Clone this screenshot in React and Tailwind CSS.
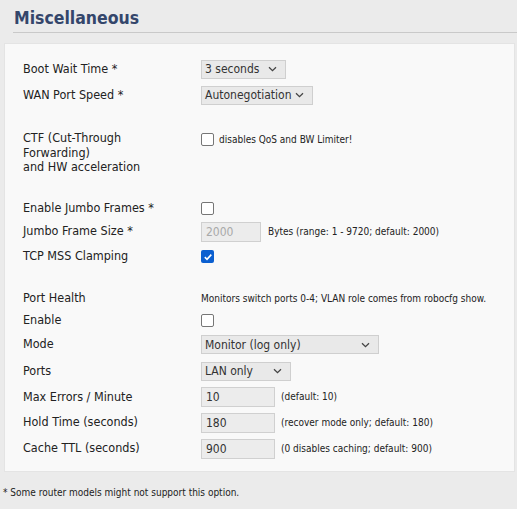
import React from "react";

const font = { fontFamily: '"DejaVu Sans Condensed", "DejaVu Sans", sans-serif' };

function Chevron() {
  return (
    <svg width="9" height="6" viewBox="0 0 9 6" className="shrink-0">
      <path d="M1 1.2 L4.5 4.6 L8 1.2" fill="none" stroke="#444" strokeWidth="1.3" />
    </svg>
  );
}

function Select({ value, w }) {
  return (
    <div className={`h-[19px] ${w} flex items-center justify-between pl-[3px] pr-[8px] bg-[#e9e9e9] border border-[#cfcfcf] text-[12px] text-[#333]`}>
      <span className="leading-none">{value}</span>
      <Chevron />
    </div>
  );
}

function Input({ value, disabled, w = "w-[74px]" }) {
  return (
    <div className={`h-[20px] ${w} flex items-center pl-[4px] bg-[#ececec] border border-[#d0d0d0] text-[12px] ${disabled ? "text-[#a9a9a9]" : "text-[#333]"}`}>
      <span className="leading-none">{value}</span>
    </div>
  );
}

function Box({ checked }) {
  if (checked)
    return (
      <div className="w-[13px] h-[13px] rounded-[2px] bg-[#0b5fd0] flex items-center justify-center">
        <svg width="10" height="10" viewBox="0 0 10 10">
          <path d="M1.8 5.2 L4 7.3 L8.3 2.6" fill="none" stroke="#fff" strokeWidth="1.6" />
        </svg>
      </div>
    );
  return <div className="w-[13px] h-[13px] rounded-[2px] border border-[#767676] bg-white" />;
}

function Row({ h, label, children }) {
  return (
    <div className={`flex items-center ${h}`}>
      <div className="w-[178px] shrink-0 text-[12.5px] text-[#222]">{label}</div>
      <div className="flex items-center">{children}</div>
    </div>
  );
}

function Note({ children, ml = "ml-[7px]" }) {
  return <span className={`${ml} text-[10px] text-[#222] leading-none`}>{children}</span>;
}

export default function App() {
  return (
    <div className="w-[517px] h-[509px] bg-[#ebebeb] overflow-hidden" style={font}>
      <div className="pt-[7px] pl-[13px]">
        <h1 className="text-[17.5px] font-bold text-[#34466b] leading-[22px] pl-[1px]">Miscellaneous</h1>
        <div className="mt-[3px] h-px bg-[#c9c9c9]" />
      </div>
      <div className="ml-[4px] mr-[2px] mt-[10px] bg-[#f9f9f9] border border-[#e4e4e4] pl-[18px] pt-[12px] pb-[9px]">
        <Row h="h-[26px]" label="Boot Wait Time *">
          <Select value="3 seconds" w="w-[85px]" />
        </Row>
        <Row h="h-[26px]" label="WAN Port Speed *">
          <Select value="Autonegotiation" w="w-[112px]" />
        </Row>
        <div className="h-[23px]" />
        <div className="flex items-start">
          <div className="w-[178px] shrink-0 text-[12.5px] text-[#222] leading-[14.6px]">
            CTF (Cut-Through
            <br />
            Forwarding)
            <br />
            and HW acceleration
          </div>
          <div className="flex items-center mt-[2px]">
            <Box />
            <Note ml="ml-[5px]">disables QoS and BW Limiter!</Note>
          </div>
        </div>
        <div className="h-[21px]" />
        <Row h="h-[25px]" label="Enable Jumbo Frames *">
          <Box />
        </Row>
        <Row h="h-[22px]" label="Jumbo Frame Size *">
          <Input value="2000" disabled w="w-[60px]" />
          <Note>Bytes (range: 1 - 9720; default: 2000)</Note>
        </Row>
        <Row h="h-[28px]" label="TCP MSS Clamping">
          <Box checked />
        </Row>
        <div className="h-[18px]" />
        <Row h="h-[20px]" label="Port Health">
          <Note ml="ml-0">Monitors switch ports 0-4; VLAN role comes from robocfg show.</Note>
        </Row>
        <Row h="h-[23px]" label="Enable">
          <Box />
        </Row>
        <Row h="h-[26px]" label="Mode">
          <Select value="Monitor (log only)" w="w-[178px]" />
        </Row>
        <Row h="h-[27px]" label="Ports">
          <Select value="LAN only" w="w-[90px]" />
        </Row>
        <Row h="h-[25px]" label="Max Errors / Minute">
          <Input value="10" />
          <Note ml="ml-[6px]">(default: 10)</Note>
        </Row>
        <Row h="h-[26px]" label="Hold Time (seconds)">
          <Input value="180" />
          <Note ml="ml-[6px]">(recover mode only; default: 180)</Note>
        </Row>
        <Row h="h-[26px]" label="Cache TTL (seconds)">
          <Input value="900" />
          <Note ml="ml-[6px]">(0 disables caching; default: 900)</Note>
        </Row>
      </div>
      <div className="pl-[3px] pt-[13px] text-[10px] text-[#222]">* Some router models might not support this option.</div>
    </div>
  );
}
